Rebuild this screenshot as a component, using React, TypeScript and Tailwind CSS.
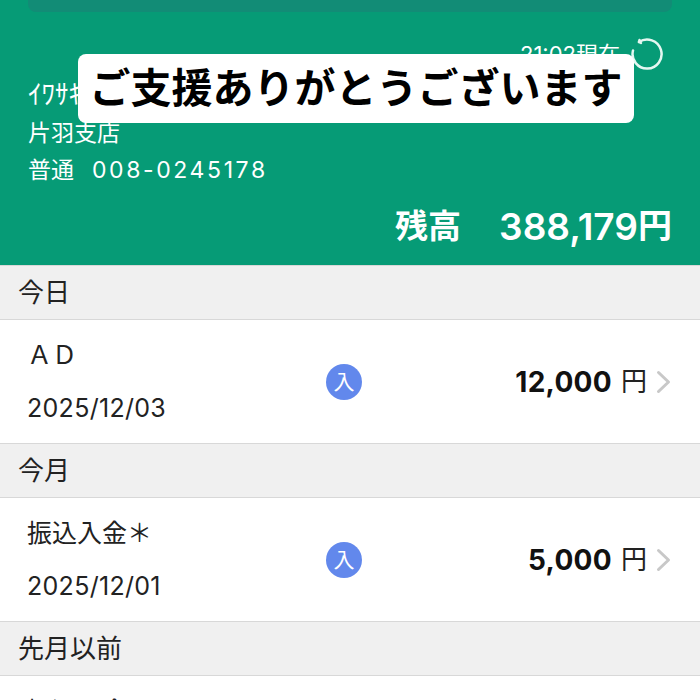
const font = { fontFamily: '"Inter", "Noto Sans CJK JP", "Liberation Sans", sans-serif' };
const cjk = { fontFamily: '"Noto Sans CJK JP", sans-serif' };

function SectionHeader({ title }: { title: string }) {
  return (
    <div className="h-[55px] flex items-center pl-[18px] bg-[#f0f0f0] border-y border-[#d8d8d8] text-[26px] leading-none text-[#222]">
      <span>{title}</span>
    </div>
  );
}

function Row({ name, date, amount }: { name: string; date: string; amount: string }) {
  return (
    <div className="h-[123px] bg-white flex items-center relative">
      <div className="w-[326px] pl-[27px] flex flex-col gap-[17px] text-[#222] pt-[2px]">
        <div className="text-[25px] leading-[36px] h-[36px] -mt-[2px]">{name}</div>
        <div className="text-[25px] leading-[36px] h-[36px] tracking-[0.3px]">{date}</div>
      </div>
      <div className="w-9 h-9 rounded-full bg-[#6288ec] text-white flex items-center justify-center text-[21px] leading-none">
        入
      </div>
      <div className="flex-1 flex items-center justify-end pr-[29px]">
        <span className="text-[28px] font-bold leading-none text-[#111] tracking-[0.3px]">{amount}</span>
        <span className="ml-[9px] text-[26px] leading-none text-[#222]">円</span>
        <svg className="ml-[9px]" width="15" height="24" viewBox="0 0 15 24" fill="none" stroke="#c8c8c8" strokeWidth="3" strokeLinecap="round" strokeLinejoin="round">
          <path d="M2.5 2.5 L12.5 12 L2.5 21.5" />
        </svg>
      </div>
    </div>
  );
}

export default function App() {
  return (
    <div className="w-[700px] h-[700px] overflow-hidden relative bg-white" style={font}>
      <div className="h-[265px] bg-[#069b76] text-white px-[28px] flex flex-col">
        <div className="h-[12px] bg-[#128c76] rounded-b-[8px]" />
        <div className="flex items-center justify-end mt-[24px] h-[36px] pr-[8px]">
          <span className="text-[22px] leading-none mr-[10px] whitespace-nowrap">21:02現在</span>
          <svg width="34" height="34" viewBox="0 0 34 34" fill="none" stroke="#e4f7f1" strokeWidth="2.5" strokeLinecap="round" strokeLinejoin="round">
            <path d="M9 5 A14.5 14.5 0 1 1 3 13.5" />
            <path d="M9.5 3 L9 5 L11 6" />
          </svg>
        </div>
        <div className="text-[27px] leading-[30px] mt-[8px] h-[30px] whitespace-nowrap">ｲﾜｻｷ ﾀﾛｳ</div>
        <div className="text-[23px] leading-[30px] mt-[8px] h-[30px]">片羽支店</div>
        <div className="text-[23px] leading-[30px] mt-[7px] h-[30px] flex">
          <span>普通</span>
          <span className="ml-[18px] tracking-[2.6px]">008-0245178</span>
        </div>
        <div className="flex justify-end items-center mt-[20px] h-[42px] font-semibold">
          <span className="text-[33px] leading-none mr-[38px]">残高</span>
          <span className="text-[37px] leading-none">388,179</span>
          <span className="text-[34px] leading-none">円</span>
        </div>
      </div>

      <SectionHeader title="今日" />
      <Row name="ＡＤ" date="2025/12/03" amount="12,000" />
      <SectionHeader title="今月" />
      <Row name="振込入金＊" date="2025/12/01" amount="5,000" />
      <SectionHeader title="先月以前" />
      <Row name="振込入金＊" date="2025/11/28" amount="3,000" />

      <div style={cjk} className="absolute left-[78px] top-[54px] w-[556px] h-[69px] pb-[6px] bg-white rounded-[8px] flex items-center justify-center text-[41px] leading-none font-bold text-black whitespace-nowrap">
        ご支援ありがとうございます
      </div>
    </div>
  );
}
